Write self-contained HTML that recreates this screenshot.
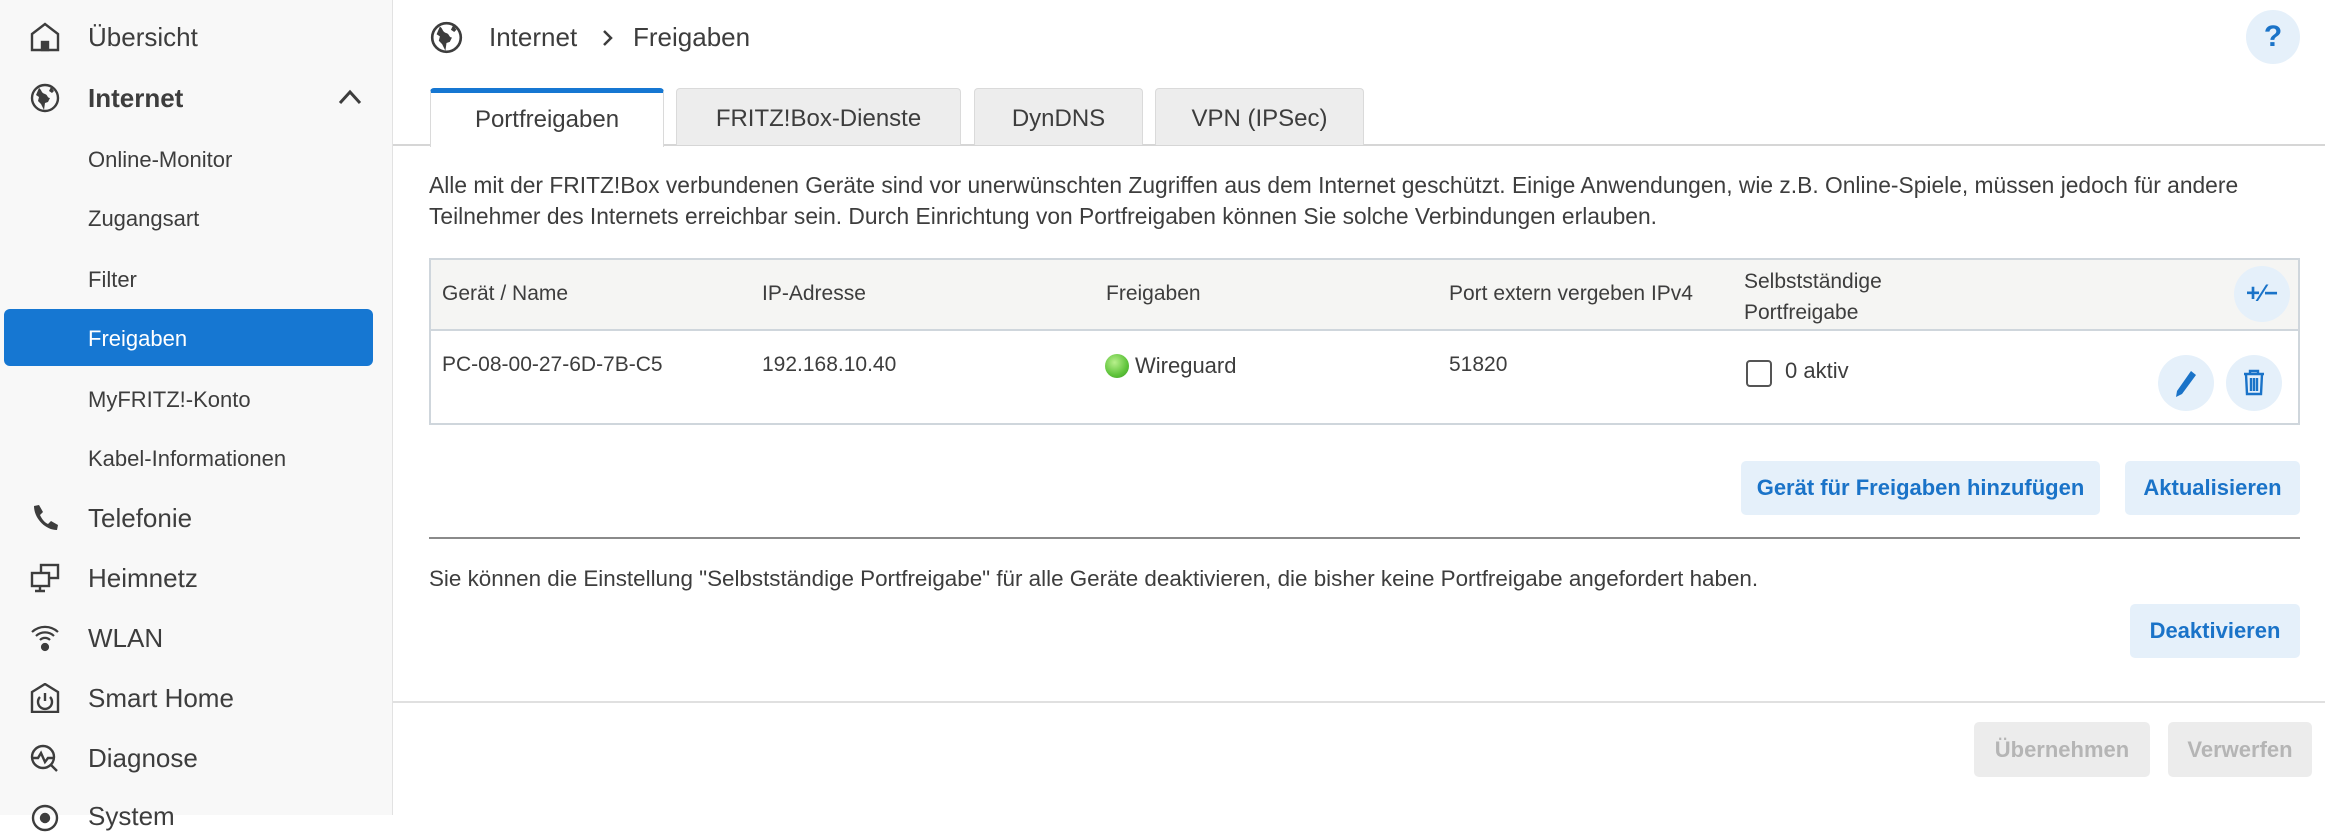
<!DOCTYPE html>
<html><head><meta charset="utf-8"><style>
*{box-sizing:border-box;margin:0;padding:0}
body{width:2325px;height:815px;overflow:hidden;background:#fff;font-family:"Liberation Sans",sans-serif;color:#3d3d3d;position:relative}
.side{position:absolute;left:0;top:0;width:393px;height:815px;background:#f8f8f8;border-right:1px solid #e2e2e2}
.it{position:absolute;left:88px;font-size:26px;line-height:30px;white-space:nowrap}
.sub{font-size:22px}
.ic{position:absolute;left:30px;width:30px;height:30px}
.act{position:absolute;left:4px;top:309px;width:369px;height:57px;background:#1677d2;border-radius:6px}
.a{position:absolute;white-space:nowrap}
.tab{position:absolute;top:88px;height:57px;background:#ededed;border:1px solid #dadada;border-bottom:none;border-radius:4px 4px 0 0;font-size:24px;text-align:center;line-height:60px}
.btn{position:absolute;background:#e5f0fa;color:#1a73c8;font-weight:bold;font-size:22px;text-align:center;border-radius:5px}
.dis{position:absolute;background:#ececec;color:#b5b5b5;font-weight:bold;font-size:22px;text-align:center;border-radius:5px}
.circ{position:absolute;width:56px;height:56px;border-radius:50%;background:#e5f0fa}
</style></head><body>
<div class="side">
<svg class="ic" style="top:22px" viewBox="0 0 30 30" fill="none" stroke="#3d3d3d" stroke-width="2.4"><path d="M2 28V12L15 2 28 12V28Z"/><rect x="12" y="20" width="6" height="8" fill="#3d3d3d"/></svg>
<div class="it" style="top:22px">Übersicht</div>
<svg class="ic" style="top:83px" viewBox="0 0 30 30"><circle cx="15" cy="15" r="13" fill="none" stroke="#3d3d3d" stroke-width="2.4"/><path d="M9 5c3 2 2 5 6 6 3 1 2 4 5 4l-2 4-3 1-1 7-3-6-3-3 1-4-3-2Z M21 4l3 4-2 2-3-2Z" fill="#3d3d3d"/></svg>
<div class="it" style="top:83px;font-weight:bold">Internet</div>
<svg style="position:absolute;left:338px;top:88px" width="24" height="18" viewBox="0 0 24 18" fill="none" stroke="#3d3d3d" stroke-width="3"><path d="M2 15 12 4 22 15"/></svg>
<div class="it sub" style="top:145px">Online-Monitor</div>
<div class="it sub" style="top:204px">Zugangsart</div>
<div class="it sub" style="top:265px">Filter</div>
<div class="act"></div>
<div class="it sub" style="top:324px;color:#fff">Freigaben</div>
<div class="it sub" style="top:385px">MyFRITZ!-Konto</div>
<div class="it sub" style="top:444px">Kabel-Informationen</div>
<svg class="ic" style="top:503px" viewBox="0 0 30 30"><path d="M4 3l5-1 4 7-3 3c2 4 4 7 8 9l3-3 7 4-1 5c-12 0-23-12-23-24Z" fill="#3d3d3d"/></svg>
<div class="it" style="top:503px">Telefonie</div>
<svg class="ic" style="top:563px" viewBox="0 0 30 30" fill="none" stroke="#3d3d3d" stroke-width="2.4"><rect x="11" y="2" width="17" height="13"/><rect x="2" y="10" width="17" height="13" fill="#f8f8f8"/><path d="M10 23v5M5 28h10"/></svg>
<div class="it" style="top:563px">Heimnetz</div>
<svg class="ic" style="top:623px" viewBox="0 0 30 30" fill="none" stroke="#3d3d3d" stroke-width="2.2"><path d="M2 9a19 19 0 0 1 26 0M6 13a13 13 0 0 1 18 0M10 17a7 7 0 0 1 10 0"/><circle cx="15" cy="24" r="3" fill="#3d3d3d"/></svg>
<div class="it" style="top:623px">WLAN</div>
<svg class="ic" style="top:683px" viewBox="0 0 30 30" fill="none" stroke="#3d3d3d" stroke-width="2.4"><path d="M2 29V9L15 1 28 9V29Z"/><path d="M10 14a7 7 0 1 0 10 0M15 10v8"/></svg>
<div class="it" style="top:683px">Smart Home</div>
<svg class="ic" style="top:743px" viewBox="0 0 30 30" fill="none" stroke="#3d3d3d" stroke-width="2.4"><circle cx="13" cy="14" r="11"/><path d="M2 15h6l3-5 4 9 3-4h6M21 22l6 6"/></svg>
<div class="it" style="top:743px">Diagnose</div>
<svg class="ic" style="top:803px" viewBox="0 0 30 30" fill="none" stroke="#3d3d3d" stroke-width="2.4"><circle cx="15" cy="15" r="12"/><circle cx="15" cy="15" r="4" fill="#3d3d3d"/></svg>
<div class="it" style="top:801px">System</div>
</div>

<svg style="position:absolute;left:430px;top:21px" width="33" height="33" viewBox="0 0 30 30"><circle cx="15" cy="15" r="13" fill="none" stroke="#3d3d3d" stroke-width="2.4"/><path d="M9 5c3 2 2 5 6 6 3 1 2 4 5 4l-2 4-3 1-1 7-3-6-3-3 1-4-3-2Z M21 4l3 4-2 2-3-2Z" fill="#3d3d3d"/></svg>
<div class="a" style="left:489px;top:22px;font-size:26px">Internet</div>
<svg style="position:absolute;left:602px;top:29px" width="12" height="18" viewBox="0 0 12 18" fill="none" stroke="#3d3d3d" stroke-width="2.5"><path d="M2 2l7 7-7 7"/></svg>
<div class="a" style="left:633px;top:22px;font-size:26px">Freigaben</div>
<div class="circ" style="left:2246px;top:10px;width:54px;height:54px;color:#1a73c8;font-weight:bold;font-size:30px;text-align:center;line-height:54px">?</div>

<div style="position:absolute;left:393px;right:0;top:144px;border-top:2px solid #d6d6d6"></div>
<div class="tab" style="left:430px;width:234px;height:59px;background:#fff;border-top:5px solid #1677d2;line-height:54px">Portfreigaben</div>
<div class="tab" style="left:676px;width:285px">FRITZ!Box-Dienste</div>
<div class="tab" style="left:974px;width:169px">DynDNS</div>
<div class="tab" style="left:1155px;width:209px">VPN (IPSec)</div>

<div class="a" style="left:429px;top:170px;font-size:22.8px;line-height:31px">Alle mit der FRITZ!Box verbundenen Geräte sind vor unerwünschten Zugriffen aus dem Internet geschützt. Einige Anwendungen, wie z.B. Online-Spiele, müssen jedoch für andere<br>Teilnehmer des Internets erreichbar sein. Durch Einrichtung von Portfreigaben können Sie solche Verbindungen erlauben.</div>

<div style="position:absolute;left:429px;top:258px;width:1871px;height:167px;border:2px solid #cfd6dc">
<div style="height:71px;background:#f5f5f3;border-bottom:2px solid #cfd6dc"></div>
</div>
<div class="a" style="left:442px;top:282px;font-size:21px">Gerät / Name</div>
<div class="a" style="left:762px;top:282px;font-size:21px">IP-Adresse</div>
<div class="a" style="left:1106px;top:282px;font-size:21px">Freigaben</div>
<div class="a" style="left:1449px;top:282px;font-size:21px">Port extern vergeben IPv4</div>
<div class="a" style="left:1744px;top:266px;font-size:21px;line-height:31px">Selbstständige<br>Portfreigabe</div>
<div class="circ" style="left:2234px;top:266px;color:#1a73c8;font-weight:bold;font-size:24px;text-align:center;line-height:56px">+⁄−</div>
<div class="a" style="left:442px;top:353px;font-size:21px">PC-08-00-27-6D-7B-C5</div>
<div class="a" style="left:762px;top:353px;font-size:21px">192.168.10.40</div>
<div style="position:absolute;left:1105px;top:354px;width:24px;height:24px;border-radius:50%;background:radial-gradient(circle at 40% 35%,#b8f08c,#5ec33a 60%,#3d9a25)"></div>
<div class="a" style="left:1135px;top:353px;font-size:22px">Wireguard</div>
<div class="a" style="left:1449px;top:353px;font-size:21px">51820</div>
<div style="position:absolute;left:1746px;top:360px;width:26px;height:27px;border:2px solid #555;border-radius:4px"></div>
<div class="a" style="left:1785px;top:358px;font-size:22px">0 aktiv</div>
<div class="circ" style="left:2158px;top:355px"><svg width="56" height="56" viewBox="0 0 56 56"><path d="M33 16l5 4-14 19-6 3 1-6Z" fill="#1a73c8"/></svg></div>
<div class="circ" style="left:2226px;top:355px"><svg width="56" height="56" viewBox="0 0 56 56" fill="none" stroke="#1a73c8" stroke-width="2.4"><path d="M18 19h20M24 19v-3h8v3M20 19l1 20h14l1-20M25 23v13M28 23v13M31 23v13"/></svg></div>

<div class="btn" style="left:1741px;top:461px;width:359px;height:54px;line-height:54px">Gerät für Freigaben hinzufügen</div>
<div class="btn" style="left:2125px;top:461px;width:175px;height:54px;line-height:54px">Aktualisieren</div>
<div style="position:absolute;left:429px;top:537px;width:1871px;border-top:2px solid #8a8a8a"></div>
<div class="a" style="left:429px;top:566px;font-size:22.4px">Sie können die Einstellung "Selbstständige Portfreigabe" für alle Geräte deaktivieren, die bisher keine Portfreigabe angefordert haben.</div>
<div class="btn" style="left:2130px;top:604px;width:170px;height:54px;line-height:54px">Deaktivieren</div>
<div style="position:absolute;left:393px;right:0;top:701px;border-top:2px solid #e0e0e0"></div>
<div class="dis" style="left:1974px;top:722px;width:176px;height:55px;line-height:55px">Übernehmen</div>
<div class="dis" style="left:2168px;top:722px;width:144px;height:55px;line-height:55px">Verwerfen</div>
</body></html>
